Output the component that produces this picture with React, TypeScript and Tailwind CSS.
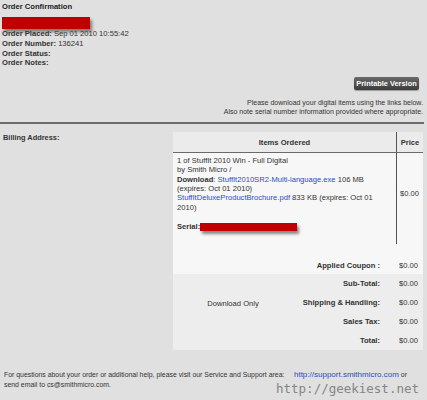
const price = '$0.00';

// Summary rows under the item list
const totals = [
  { label: 'Sub-Total:', value: price },
  { label: 'Shipping & Handling:', value: price },
  { label: 'Sales Tax:', value: price },
  { label: 'Total:', value: price },
];

const Redacted = ({ className }: { className: string }) => (
  <div className={`bg-[#c00000] shadow-[2px_3px_3px_rgba(0,0,0,0.45)] ${className}`} />
);

export default function App() {
  return (
    <div className="relative h-[400px] w-[427px] overflow-hidden bg-[#e0e0e0] font-['Liberation_Sans',Arial,sans-serif] text-[#333]">
      {/* Order header */}
      <div className="px-[2px] pt-[2px] leading-[10px]">
        <div className="text-[7.6px] font-bold text-[#222]">Order Confirmation</div>
        <Redacted className="mt-[5px] h-[12px] w-[88px]" />
        <div className="text-[7.6px] leading-[9.8px]">
          <div>
            <span className="font-bold">Order Placed:</span> Sep 01 2010 10:55:42
          </div>
          <div>
            <span className="font-bold">Order Number:</span> 136241
          </div>
          <div className="font-bold">Order Status:</div>
          <div className="font-bold">Order Notes:</div>
        </div>
      </div>

      {/* Print button + note */}
      <div className="flex flex-col items-end pr-[4px]">
        <button className="mr-[4px] mt-[9px] flex h-[13px] w-[65px] items-center justify-center rounded-[2px] bg-gradient-to-b from-[#6a6a6a] to-[#3c3c3c] text-[7.4px] font-bold text-white shadow-[0_1px_1px_rgba(0,0,0,0.3)]">
          Printable Version
        </button>
        <div className="mt-[8px] text-right text-[7px] leading-[9px] text-[#333]">
          <div>Please download your digital items using the links below.</div>
          <div>Also note serial number information provided where appropriate.</div>
        </div>
      </div>

      <div className="mr-[3px] mt-[6px] h-[2px] bg-[#6c6c6c]" />

      {/* Billing + order table */}
      <div className="mt-[8px] flex pr-[4px]">
        <div className="w-[173px] pl-[3px] pt-[1px] text-[7.4px] font-bold leading-[9px] text-[#333]">
          Billing Address:
        </div>
        <div className="flex-1 text-[7.6px] leading-[9.3px]">
          {/* Header row */}
          <div className="flex h-[21px] border-b border-[#6a6a6a] bg-[#ebebeb] font-bold text-[#333]">
            <div className="flex w-[223px] items-center justify-center">Items Ordered</div>
            <div className="flex flex-1 items-center justify-center border-l border-[#555]">Price</div>
          </div>

          {/* Item row */}
          <div className="flex h-[91px] bg-[#f7f7f7]">
            <div className="w-[223px] pl-[4px] pt-[3px]">
              <div>1 of StuffIt 2010 Win - Full Digital</div>
              <div>by Smith Micro /</div>
              <div>
                <span className="font-bold">Download</span>:{' '}
                <span className="text-[#2a4cc0]">StuffIt2010SR2-Multi-language.exe</span> 106 MB
              </div>
              <div>(expires: Oct 01 2010)</div>
              <div>
                <span className="text-[#2a4cc0]">StuffItDeluxeProductBrochure.pdf</span> 833 KB (expires: Oct 01
              </div>
              <div>2010)</div>
              <div className="mt-[10px] flex items-center">
                <span className="font-bold">Serial:</span>
                <Redacted className="h-[8px] w-[97px]" />
              </div>
            </div>
            <div className="flex flex-1 items-center border-l border-[#555] pb-[10px] pl-[3px]">{price}</div>
          </div>

          {/* Coupon row */}
          <div className="flex h-[30px] items-end bg-[#f7f7f7] pb-[4px]">
            <div className="flex-1 pr-[16px] text-right font-bold">Applied Coupon :</div>
            <div className="w-[27px] pl-[3px]">{price}</div>
          </div>

          {/* Totals */}
          <div className="flex bg-[#ededed]">
            <div className="flex h-[38px] w-[120px] items-end justify-center pb-[4px]">Download Only</div>
            <div className="flex-1">
              {totals.map((row) => (
                <div key={row.label} className="flex h-[19px] items-center">
                  <div className="flex-1 pr-[16px] text-right font-bold">{row.label}</div>
                  <div className="w-[27px] pl-[3px]">{row.value}</div>
                </div>
              ))}
            </div>
          </div>
        </div>
      </div>

      {/* Support footer */}
      <div className="mt-[20px] pl-[4px] text-[6.9px] leading-[9.5px] text-[#333]">
        <div>
          For questions about your order or additional help, please visit our Service and Support area:{'\u00a0\u00a0\u00a0\u00a0\u00a0'}
          <span className="text-[8px] text-[#2a4cc0]">http://support.smithmicro.com</span> or
        </div>
        <div>send email to cs@smithmicro.com.</div>
      </div>

      <div className="absolute left-[276px] top-[382px] font-['DejaVu_Sans_Mono',monospace] text-[12.5px] leading-[14px] text-[#858585]">
        http://geekiest.net
      </div>
    </div>
  );
}
